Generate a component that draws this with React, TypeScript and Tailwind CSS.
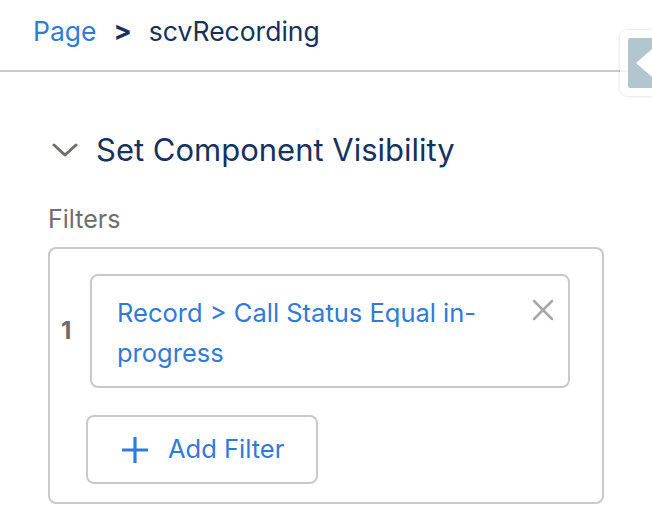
import React from 'react';

const PanelTab: React.FC = () => (
  <div className="absolute left-[620px] top-[30px] w-[40px] h-[66px] rounded-[8px] bg-white/80 shadow-[0_0_3px_rgba(0,0,0,0.18)] p-[8px] pr-0">
    <div className="w-full h-full bg-[#a9c0ca]/90 rounded-l-[2px] flex items-center pl-[8px]">
      <svg width="16" height="28" viewBox="0 0 16 28">
        <path d="M0 14 L16 0 L16 28 Z" fill="#ffffff" />
      </svg>
    </div>
  </div>
);

const App: React.FC = () => {
  return (
    <div className="relative w-[652px] h-[530px] bg-white overflow-hidden font-['Inter',sans-serif]">
      {/* Breadcrumb */}
      <div className="h-[72px] border-b-2 border-[#c9c9c9] flex items-start pt-[13px] pl-[33px] text-[26.5px] leading-[36px]">
        <span className="text-[#2f7bd6]">Page</span>
        <span className="mx-[17px] font-bold text-[#16325c] text-[27px]">&gt;</span>
        <span className="text-[#16325c]">scvRecording</span>
      </div>

      <PanelTab />

      <div className="pl-[48px] pr-[48px]">
        {/* Section header */}
        <div className="flex items-center h-[40px] mt-[58px]">
          <svg width="26" height="16" viewBox="0 0 26 16" className="ml-[4px]">
            <path d="M2 3 L13 13 L24 3" fill="none" stroke="#706e6b" strokeWidth="3" strokeLinecap="round" strokeLinejoin="round" />
          </svg>
          <h2 className="ml-[18px] text-[31px] text-[#16325c] leading-[40px]">Set Component Visibility</h2>
        </div>

        {/* Filters */}
        <div className="mt-[34px] text-[25px] leading-[30px] text-[#706e6b]">Filters</div>

        <div className="mt-[13px] w-[556px] h-[257px] border-2 border-[#c9c9c9] rounded-[8px] pt-[25px]">
          <div className="flex items-center">
            <span className="w-[40px] pl-[11px] text-[24px] font-bold text-[#6b6b6b]">1</span>
            <div className="w-[480px] h-[114px] border-2 border-[#c9c9c9] rounded-[8px] flex items-start pt-[17px] pl-[25px] pr-[14px]">
              <p className="flex-1 text-[25.5px] leading-[40px] text-[#2f7bd6]">
                Record &gt; Call Status Equal in-
                <br />
                progress
              </p>
              <svg width="22" height="22" viewBox="0 0 22 22" className="mt-[6px] ml-[8px]">
                <path d="M2 2 L20 20 M20 2 L2 20" stroke="#a8a8a8" strokeWidth="2.5" strokeLinecap="round" />
              </svg>
            </div>
          </div>

          <button className="ml-[36px] mt-[27px] w-[232px] h-[69px] border-2 border-[#c9c9c9] rounded-[8px] flex items-center pl-[33px] bg-white">
            <svg width="28" height="28" viewBox="0 0 28 28">
              <path d="M14 1 L14 27 M1 14 L27 14" stroke="#2f7bd6" strokeWidth="3.2" />
            </svg>
            <span className="ml-[19px] text-[25.5px] text-[#2f7bd6]">Add Filter</span>
          </button>
        </div>
      </div>
    </div>
  );
};

export default App;
